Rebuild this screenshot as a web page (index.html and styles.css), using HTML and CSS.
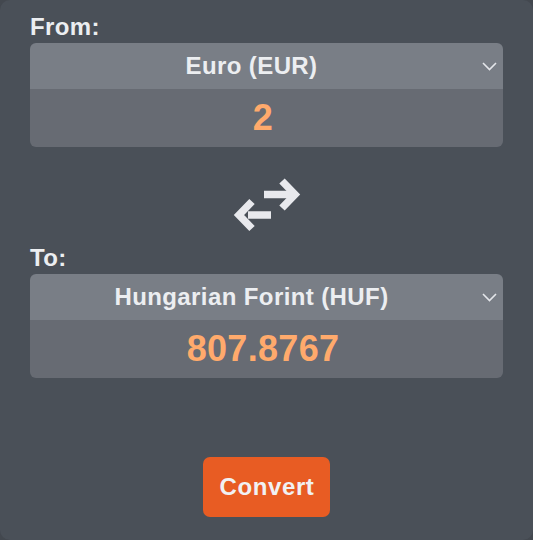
FILE: index.html
```html
<!DOCTYPE html>
<html lang="en">
<head>
  <meta charset="UTF-8">
  <meta name="viewport" content="width=device-width, initial-scale=1.0">
  <title>Currency Converter</title>
  <link rel="stylesheet" href="styles.css">
</head>
<body>
  <div class="card">
    <label class="field-label">From:</label>
    <div class="currency-box">
      <div class="currency-select">
        <span>Euro (EUR)</span>
        <svg class="chevron" width="15" height="9" viewBox="0 0 15 9"><polyline points="1,1 7.5,7.5 14,1" fill="none" stroke="#e4e6ea" stroke-width="1.6"/></svg>
      </div>
      <div class="currency-amount">2</div>
    </div>

    <div class="swap">
      <svg width="72" height="60" viewBox="0 0 72 60">
        <g fill="none" stroke="#e8e9ed" stroke-width="7.5" stroke-miterlimit="4">
          <line x1="33" y1="19.5" x2="62" y2="19.5"/>
          <polyline points="51,6 64,19.5 51,33"/>
          <line x1="17" y1="40" x2="40" y2="40"/>
          <polyline points="21,26.5 8,40 21,53.5"/>
        </g>
      </svg>
    </div>

    <label class="field-label">To:</label>
    <div class="currency-box">
      <div class="currency-select">
        <span>Hungarian Forint (HUF)</span>
        <svg class="chevron" width="15" height="9" viewBox="0 0 15 9"><polyline points="1,1 7.5,7.5 14,1" fill="none" stroke="#e4e6ea" stroke-width="1.6"/></svg>
      </div>
      <div class="currency-amount">807.8767</div>
    </div>

    <div class="actions">
      <button type="button" class="btn-convert">Convert</button>
    </div>
  </div>
</body>
</html>
```

FILE: styles.css
```css
html, body {
  height: 100%;
  margin: 0;
  padding: 0;
  font-family: "Liberation Sans", Arial, sans-serif;
  background-color: #43484f;
}
.card {
  height: 100%;
  box-sizing: border-box;
  padding: 13px 30px 0;
  background-color: #4a5058;
  border-radius: 10px;
  display: flex;
  flex-direction: column;
}
.field-label {
  display: block;
  font-size: 24px;
  font-weight: bold;
  line-height: 28px;
  letter-spacing: 0.4px;
  color: #eceef1;
  margin-bottom: 2px;
}
.currency-box {
  border-radius: 6px;
  overflow: hidden;
}
.currency-select {
  position: relative;
  height: 46px;
  padding-right: 30px;
  display: flex;
  align-items: center;
  justify-content: center;
  background-color: #797e86;
  color: #eceef1;
  font-size: 24px;
  font-weight: bold;
  letter-spacing: 0.4px;
}
.chevron {
  position: absolute;
  right: 6px;
  top: 19px;
}
.currency-amount {
  height: 58px;
  padding-right: 7px;
  display: flex;
  align-items: center;
  justify-content: center;
  background-color: #676b73;
  color: #ffaa6c;
  font-size: 36px;
  font-weight: bold;
  letter-spacing: 0.3px;
}
.swap {
  display: flex;
  justify-content: center;
  padding: 28px 0 9px;
}
.swap svg {
  display: block;
  margin-left: 1px;
}
.actions {
  display: flex;
  justify-content: center;
  margin-top: 79px;
}
.btn-convert {
  font-family: "Liberation Sans", Arial, sans-serif;
  font-size: 24px;
  font-weight: bold;
  line-height: 28px;
  letter-spacing: 0.6px;
  padding: 16px 16px 16px 17px;
  color: #f1f1f3;
  background-color: #e85c23;
  border: none;
  border-radius: 7px;
  cursor: pointer;
}
```
